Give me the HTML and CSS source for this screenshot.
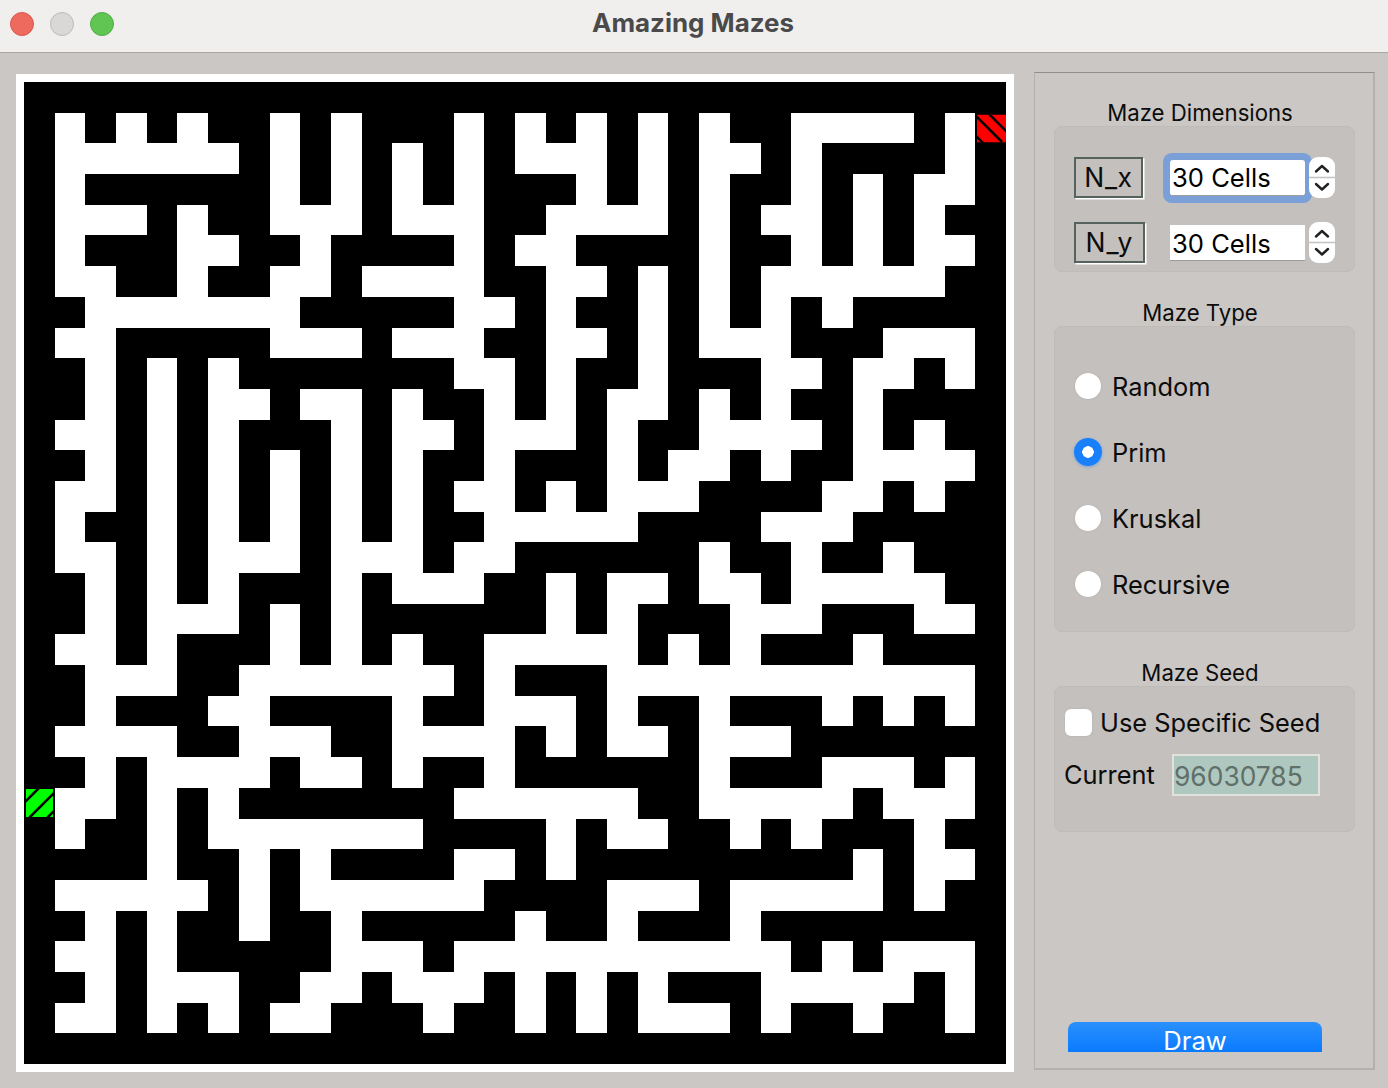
FILE: index.html
```html
<!DOCTYPE html>
<html lang="en">
<head>
<meta charset="utf-8">
<title>Amazing Mazes</title>
<link rel="stylesheet" href="styles.css">
</head>
<body>
<div class="window">
  <header class="titlebar">
    <div class="lights">
      <span class="light light-red"></span>
      <span class="light light-gray"></span>
      <span class="light light-green"></span>
    </div>
    <div class="window-title">Amazing Mazes</div>
  </header>
  <main class="content">
    <div class="maze-frame"><canvas id="maze" class="maze" width="982" height="982"></canvas></div>
    <aside class="panel">
      <div class="group-title">Maze Dimensions</div>
      <section class="group group-dims">
        <div class="dim-row">
          <div class="dim-label dim-label-x">N_x</div>
          <div class="dim-input dim-input-focus">30 Cells</div>
          <div class="spinner">
            <svg class="chev" viewBox="0 0 26 41" width="26" height="41"><path d="M7 14.5 L13 9 L19 14.5 M7 27 L13 32.5 L19 27" fill="none" stroke="#222" stroke-width="2.4" stroke-linecap="round" stroke-linejoin="round"/></svg>
          </div>
        </div>
        <div class="dim-row">
          <div class="dim-label dim-label-y">N_y</div>
          <div class="dim-input dim-input-second">30 Cells</div>
          <div class="spinner">
            <svg class="chev" viewBox="0 0 26 41" width="26" height="41"><path d="M7 14.5 L13 9 L19 14.5 M7 27 L13 32.5 L19 27" fill="none" stroke="#222" stroke-width="2.4" stroke-linecap="round" stroke-linejoin="round"/></svg>
          </div>
        </div>
      </section>
      <div class="group-title group-title-next">Maze Type</div>
      <section class="group group-type">
        <div class="radio-row"><span class="radio"></span><span>Random</span></div>
        <div class="radio-row"><span class="radio radio-on"></span><span>Prim</span></div>
        <div class="radio-row"><span class="radio"></span><span>Kruskal</span></div>
        <div class="radio-row"><span class="radio"></span><span>Recursive</span></div>
      </section>
      <div class="group-title group-title-next">Maze Seed</div>
      <section class="group group-seed">
        <div class="check-row"><span class="check"></span><span>Use Specific Seed</span></div>
        <div class="seed-row"><span class="seed-label">Current</span><div class="seed-entry">96030785</div></div>
      </section>
      <div class="draw-wrap"><div class="draw">Draw</div></div>
    </aside>
  </main>
</div>
<script src="maze.js"></script>
</body>
</html>
```
FILE: styles.css
```css
* { box-sizing: border-box; }
html, body { margin: 0; padding: 0; }
body {
  width: 1388px;
  height: 1088px;
  overflow: hidden;
  background: #cbc7c4;
  color: #0c0c0c;
  font-family: Inter, "Liberation Sans", sans-serif;
}
.window { display: flex; flex-direction: column; height: 1088px; }

.titlebar {
  position: relative;
  display: flex;
  align-items: center;
  justify-content: center;
  height: 53px;
  flex: none;
  background: #f1efee;
  border-bottom: 1px solid #a9a6a3;
}
.lights {
  position: absolute;
  left: 10px;
  top: 12px;
  display: flex;
  gap: 16px;
}
.light { width: 24px; height: 24px; border-radius: 50%; border: 1px solid; }
.light-red { background: #ee6a5f; border-color: #d9574c; }
.light-gray { background: #d9d8d7; border-color: #bcbbba; }
.light-green { background: #61c554; border-color: #50ad44; }
.window-title {
  font-size: 25.9px;
  font-weight: 700;
  color: #4a4a4a;
  line-height: 30px;
  margin-top: -7px;
  padding-right: 2px;
}

.content {
  display: flex;
  gap: 20px;
  padding: 19px 0 0 16px;
  align-items: flex-start;
}
.maze-frame {
  flex: none;
  margin-top: 2px;
  padding: 8px;
  background: #fff;
  width: 998px;
  height: 998px;
}
.maze { display: block; width: 982px; height: 982px; }

.panel {
  flex: none;
  display: flex;
  flex-direction: column;
  width: 341px;
  height: 998px;
  padding: 27px 18px 16px 19px;
  border: 1px solid #b3b1af;
  border-top-color: #8e8e8e;
  border-width: 1px 2px 2px 1px;
}
.group-title {
  height: 26px;
  line-height: 26px;
  font-size: 22.2px;
  text-align: center;
  padding-right: 9px;
}
.group-title-next { margin-top: 28px; }
.group {
  background: #c4c0bd;
  border: 1px solid #bfbbb8;
  border-radius: 8px;
  font-size: 25.4px;
}
.group-dims { height: 146px; padding: 30px 0 0 19px; display: flex; flex-direction: column; gap: 24px; font-size: 25.6px; }
.group-type { height: 306px; padding: 45px 0 0 19px; display: flex; flex-direction: column; gap: 36px; }
.group-seed { height: 146px; padding: 22px 0 0 9px; }

.dim-row { display: grid; grid-template-columns: 96px 135px 30px; align-items: center; height: 41px; }
.dim-label {
  height: 41px;
  line-height: 37px;
  text-align: center;
  font-size: 26.5px;
  letter-spacing: 0.6px;
  border: 2px solid #55625e;
  box-shadow: 1.5px 1.5px 0 #fff;
  background: #c4c0bd;
}
.dim-label-x { width: 69px; }
.dim-label-y { width: 71px; letter-spacing: 1px; }
.dim-input {
  height: 36px;
  line-height: 36px;
  padding-left: 2px;
  background: #fff;
  border-bottom: 1px solid #9c9c9c;
  color: #000;
}
.dim-input-second { line-height: 38px; }
.dim-input-focus {
  box-shadow: 0 0 0 7px #7ba0d8;
  border-radius: 3px;
}
.spinner {
  position: relative;
  width: 26px;
  height: 41px;
  margin-left: 4px;
  background: linear-gradient(#fff 0 47%, #c4c4c4 49% 51%, #fff 53%);
  border-radius: 9px;
}
.chev { display: block; }

.radio-row { display: flex; align-items: center; gap: 10px; height: 30px; line-height: 32px; }
.radio {
  flex: none;
  width: 26px;
  height: 26px;
  margin: -2px 1px 0 1px;
  border-radius: 50%;
  background: #fff;
  box-shadow: 0 0 2px #aaa;
}
.radio-on {
  width: 28px;
  height: 28px;
  margin: -2px 0 0 0;
  background: radial-gradient(circle, #fff 0 5.5px, #1a7ffb 6px);
  box-shadow: 0 1px 3px rgba(26, 127, 251, 0.45);
}

.check-row { display: flex; align-items: center; gap: 8px; height: 27px; line-height: 29px; padding-left: 1px; }
.check {
  flex: none;
  width: 27px;
  height: 27px;
  background: #fff;
  border-radius: 6px;
  box-shadow: 0 0 2px #aaa;
}
.seed-row { display: flex; align-items: center; margin-top: 18px; height: 42px; line-height: 44px; }
.seed-label { width: 108px; }
.seed-entry {
  width: 148px;
  height: 42px;
  line-height: 40px;
  background: #afc8bf;
  border: 2px solid #e3e1de;
  color: #5f6f69;
  font-size: 26.4px;
}

.draw-wrap { margin-top: auto; padding-left: 14px; }
.draw {
  width: 254px;
  height: 30px;
  overflow: hidden;
  border-radius: 8px 8px 0 0;
  background: linear-gradient(#2b90fc, #0a7bff);
  color: #fff;
  text-align: center;
  font-size: 25.6px;
  line-height: 38px;
}
```
FILE: maze.js
```js
var rows = [
  "################################",
  "#.#.#.##.#.###.#.#.#.#.##....#.#",
  "#......#.#.#.#.#...#.#..#.####.#",
  "#.######.#.#.#.###.#.#.##.#.#..#",
  "#...#.##...#...##....#.#..#.#.##",
  "#.###..##.####.#..####.##.#.#..#",
  "#..##.##..#....##..#.#.#......##",
  "##.......#####..#.##.#.#.#.#####",
  "#..#####...#...##..#.#...###...#",
  "##.#.#.#######..#.##.###..#..#.#",
  "##.#.#..#..#.##.#.#..#.#.##.####",
  "#..#.#.###.#..#...#.##....#.#.##",
  "##.#.#.#.#.#.##.###.#..#.##....#",
  "#..#.#.#.#.#.#..#.#...####..#.##",
  "#.##.#.#.#.#.##.....####...#####",
  "#..#.#...#...#..######.##.##.###",
  "##.#.#.###.#...##.#..#..#.....##",
  "##.#...#.#.######.#.###...###..#",
  "#..#.###.#.#.##.....#.#.###.####",
  "##...##.......#.###............#",
  "##.###..####.##...#.##.###.#.#.#",
  "#....##...##....#.#..#...#######",
  "##.#....#..#.##.######.###...#.#",
  "#..#.#.#######......##.....#...#",
  "#.##.#.......####.#..##.#.###.##",
  "####.##.#.####..#.#########.#..#",
  "#.....#.#......####...#.....#.##",
  "##.#.##.##.#####.##.###.########",
  "#..#.#####...#...........#.#...#",
  "##.#...##..#...#.#.#.###.....#.#",
  "#..#.#.#..###.##.#.#...#.##.##.#",
  "################################"
];

var canvas = document.getElementById("maze");
var ctx = canvas.getContext("2d");
var cell = 982 / 32;

ctx.fillStyle = "#fff";
ctx.fillRect(0, 0, 982, 982);
ctx.fillStyle = "#000";
rows.forEach(function (row, r) {
  for (var c = 0; c < row.length; c++) {
    if (row.charAt(c) !== "#") continue;
    var x0 = Math.round(c * cell), x1 = Math.round((c + 1) * cell);
    var y0 = Math.round(r * cell), y1 = Math.round((r + 1) * cell);
    ctx.fillRect(x0, y0, x1 - x0, y1 - y0);
  }
});

function marker(x, y, w, h, colour, lines) {
  ctx.save();
  ctx.beginPath();
  ctx.rect(x, y, w, h);
  ctx.clip();
  ctx.fillStyle = colour;
  ctx.fillRect(x, y, w, h);
  ctx.strokeStyle = "#000";
  ctx.lineWidth = 2.6;
  lines.forEach(function (l) {
    ctx.beginPath();
    ctx.moveTo(l[0], l[1]);
    ctx.lineTo(l[2], l[3]);
    ctx.stroke();
  });
  ctx.restore();
}

// Finish: red with "\" hatching, Start: green with "/" hatching
marker(953, 32.5, 29, 28, "#ff0000", [
  [948, 30, 978, 60],
  [963, 30, 993, 60],
  [928, 30, 968, 70]
]);
marker(2, 707, 27, 28, "#00ff00", [
  [0, 721, 21, 700],
  [0, 741, 41, 700],
  [19, 740, 40, 719]
]);
```
